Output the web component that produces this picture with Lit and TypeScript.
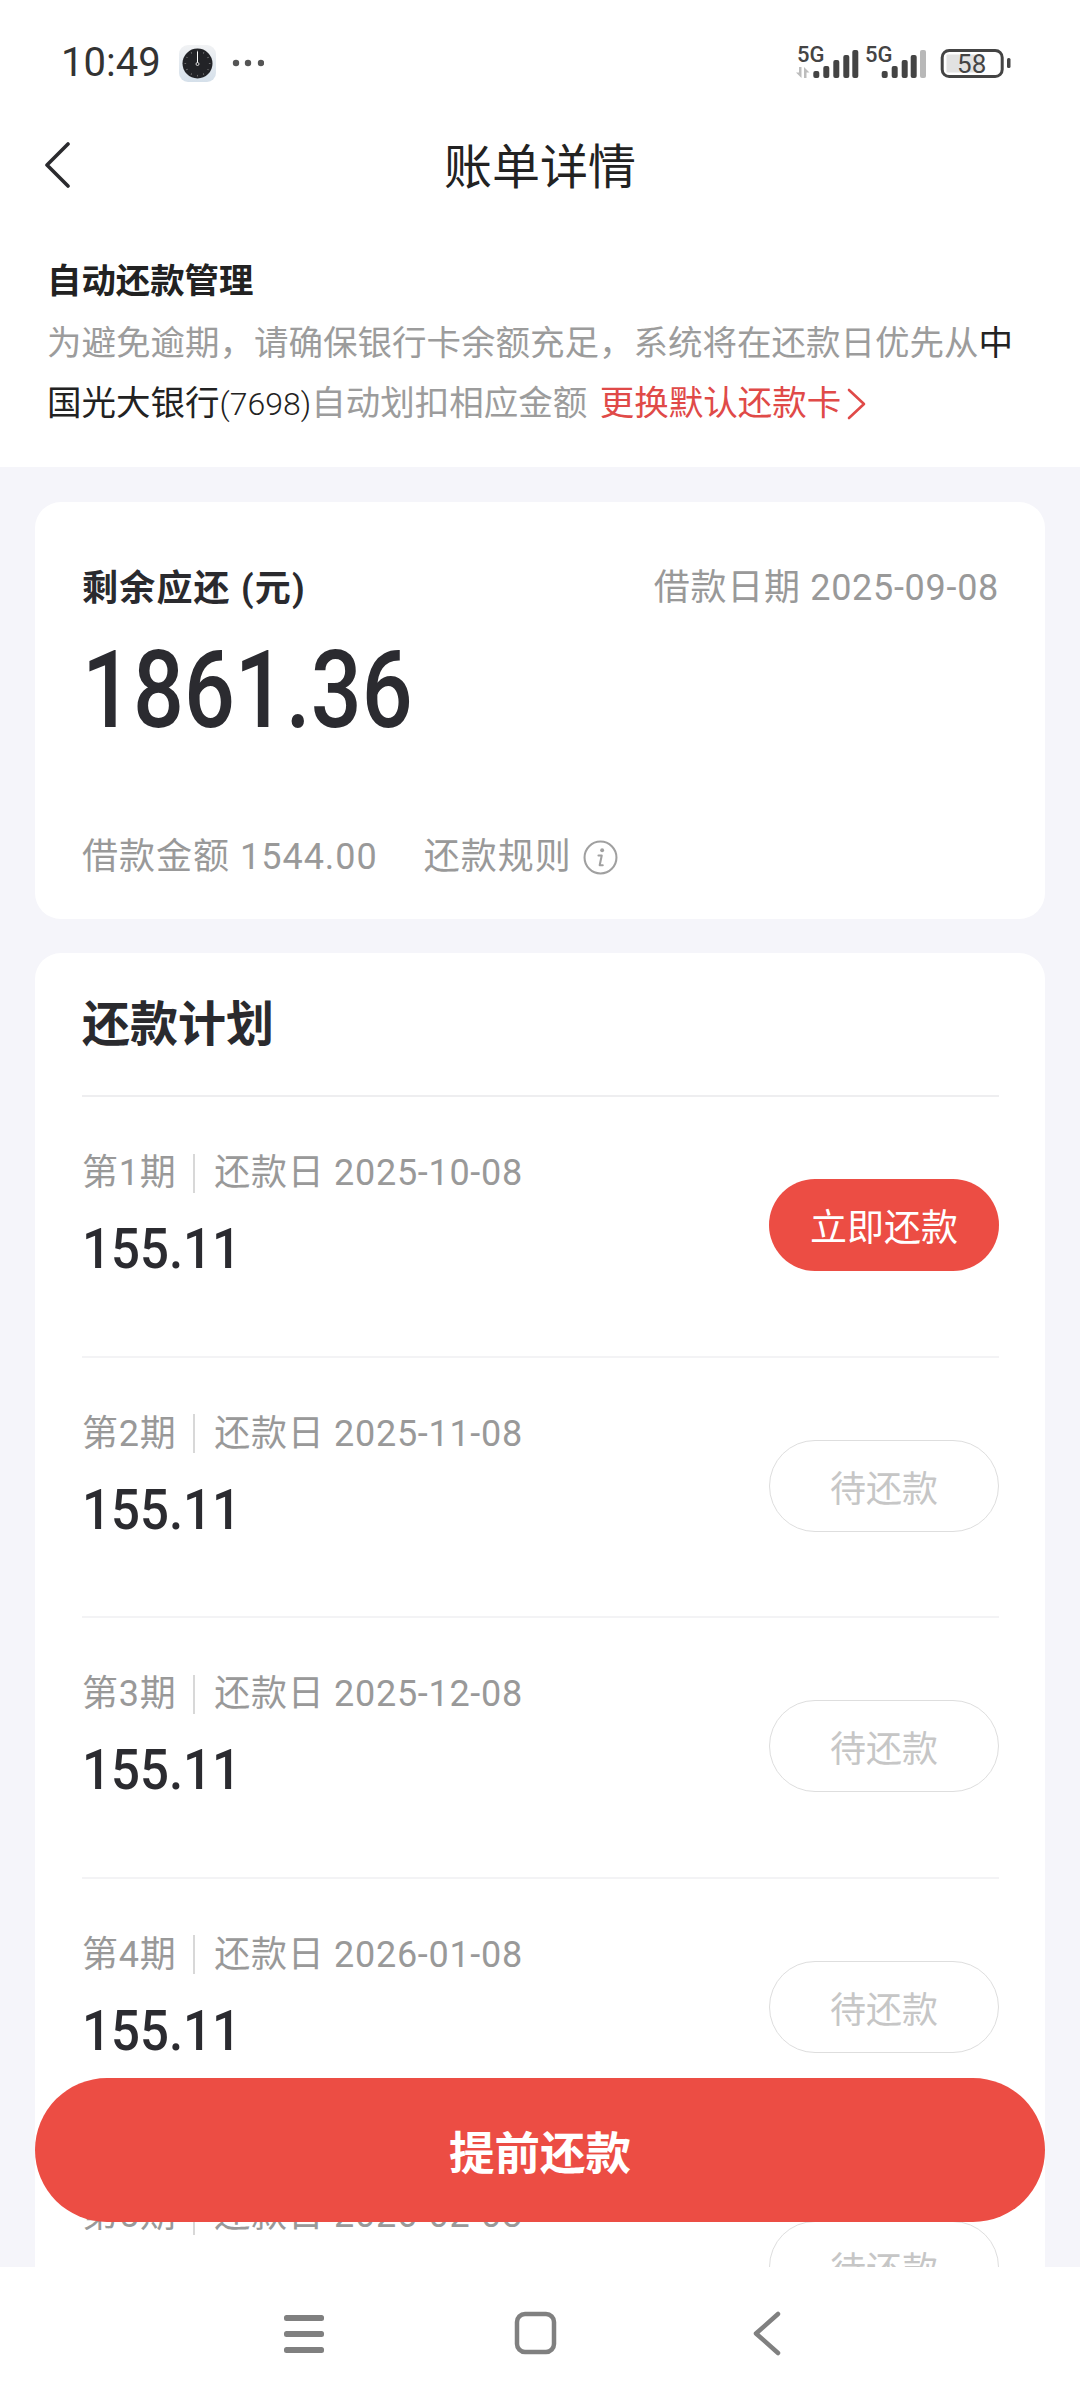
import { LitElement, html, css, svg } from "lit";
import { customElement } from "lit/decorators.js";

const COMMA = "\uFF0C";

const rows = [
  { n: 1, d: "2025-10-08", now: true },
  { n: 2, d: "2025-11-08", now: false },
  { n: 3, d: "2025-12-08", now: false },
  { n: 4, d: "2026-01-08", now: false },
  { n: 5, d: "2026-02-08", now: false },
];

const heights = [7, 12, 18, 23, 28];
const bars = (xs: number[], lastGray: boolean) =>
  xs.map(
    (x, i) =>
      svg`<rect x=${x} y=${33 - heights[i]} width="6" height=${heights[i]} rx="2" fill=${lastGray && i === 4 ? "#b8b8b8" : "#444"}></rect>`
  );

@customElement("app-root")
export class AppRoot extends LitElement {
  static styles = css`
    :host {
      display: flex;
      flex-direction: column;
      position: relative;
      width: 1080px;
      height: 2400px;
      overflow: hidden;
      background: #fff;
      font-family: Roboto, "Noto Sans CJK SC", sans-serif;
      color: #2a2a2e;
    }
    .status {
      height: 126px;
      flex: none;
      display: flex;
      align-items: center;
      padding: 0 68px 0 61px;
      box-sizing: border-box;
    }
    .time {
      font-size: 40px;
      font-weight: 400;
      color: #333;
      line-height: 1;
      width: 118px;
    }
    .dots {
      margin-left: 16px;
      flex: 1;
      display: flex;
    }
    .clock,
    .dots svg {
      display: block;
    }
    .sys {
      display: block;
      margin-top: 4px;
    }
    .head {
      height: 78px;
      flex: none;
      display: flex;
      align-items: center;
      justify-content: center;
      position: relative;
      font-size: 48px;
      color: #222;
      padding-bottom: 5px;
      box-sizing: border-box;
    }
    .back {
      position: absolute;
      left: 44px;
      top: 16px;
    }
    .notice {
      flex: none;
      padding: 52px 47px 34px;
    }
    .notice h2 {
      margin: 0 0 7px;
      font-size: 34.4px;
      line-height: 50px;
      font-weight: 700;
      color: #222;
    }
    .notice p {
      margin: 0;
      font-size: 34.5px;
      line-height: 60px;
      color: #9c9c9c;
      white-space: nowrap;
    }
    .dark {
      color: #222;
    }
    .num {
      font-weight: 300;
      font-size: 32px;
      line-height: 1;
    }
    .link {
      color: #e04a48;
      margin-left: 4px;
    }
    .link svg {
      vertical-align: -5px;
      margin-left: 6px;
    }
    .main {
      flex: 1;
      min-height: 0;
      overflow: hidden;
      background: #f5f5fa;
      padding: 35px 35px 0 35px;
      display: flex;
      flex-direction: column;
      gap: 34px;
    }
    .card {
      flex: none;
      background: #fff;
      border-radius: 26px;
      padding: 0 46px 0 47px;
    }
    .sum {
      height: 417px;
      box-sizing: border-box;
      padding-top: 61px;
    }
    .sum-top {
      display: flex;
      justify-content: space-between;
      align-items: center;
      height: 50px;
    }
    .sum-top b {
      font-size: 36px;
      font-weight: 700;
      color: #2a2a2e;
      letter-spacing: 1.2px;
      margin-bottom: 6px;
    }
    .muted {
      font-size: 36px;
      letter-spacing: 0.7px;
      color: #999;
      line-height: 50px;
      white-space: nowrap;
    }
    .big {
      font-size: 108px;
      font-weight: 500;
      line-height: 100px;
      height: 100px;
      margin-top: 27px;
      transform: scaleX(0.83);
      transform-origin: left center;
      color: #2b2b30;
    }
    .sum-bot {
      display: flex;
      align-items: center;
      margin-top: 92px;
      height: 50px;
    }
    .sum-bot .muted {
      letter-spacing: 1px;
    }
    .rule {
      margin-left: 46px;
    }
    .info {
      margin-left: 11px;
      display: block;
    }
    .plan {
      padding-bottom: 40px;
    }
    .plan h3 {
      margin: 0;
      height: 142px;
      line-height: 144px;
      font-size: 48px;
      font-weight: 700;
      color: #2a2a2e;
    }
    .row {
      border-top: 2px solid #f3f3f5;
      height: 260.5px;
      box-sizing: border-box;
      display: flex;
      align-items: center;
      justify-content: space-between;
    }
    .plan h3 + .row {
      border-top-color: #eeeef0;
    }
    .left {
      padding-bottom: 25px;
    }
    .label {
      display: flex;
      align-items: center;
    }
    .sep {
      width: 2px;
      height: 39px;
      background: #d8d8d8;
      margin: 0 19px 0 17px;
    }
    .amt {
      font-size: 56px;
      font-weight: 500;
      line-height: 60px;
      margin-top: 21px;
      transform: scaleX(0.91);
      transform-origin: left center;
      color: #2b2b30;
    }
    .btn {
      width: 230px;
      height: 92px;
      margin-bottom: 2px;
      box-sizing: border-box;
      border-radius: 46px;
      display: flex;
      align-items: center;
      justify-content: center;
      font-size: 36px;
    }
    .btn.on {
      background: #ec4d44;
      color: #fff;
      font-size: 37px;
    }
    .btn.off {
      border: 1px solid #dedede;
      color: #c6c6c6;
    }
    .cta {
      position: absolute;
      left: 35px;
      right: 35px;
      top: 2078px;
      height: 144px;
      border-radius: 72px;
      background: #ec4d44;
      color: #fff;
      font-size: 45.5px;
      font-weight: 700;
      display: flex;
      align-items: center;
      justify-content: center;
    }
    .nav {
      flex: none;
      position: relative;
      height: 133px;
      background: #fff;
      display: flex;
      justify-content: center;
      padding-top: 44px;
      box-sizing: border-box;
    }
    .nav svg {
      display: block;
    }
  `;

  private clock() {
    const ticks = [0, 30, 60, 90, 120, 150, 180, 210, 240, 270, 300, 330];
    return html`<svg class="clock" width="37" height="37" viewBox="0 0 37 37">
      <defs>
        <linearGradient id="cg" x1="0" y1="0" x2="0" y2="1">
          <stop offset="0" stop-color="#f1f2f4"></stop>
          <stop offset="1" stop-color="#d5e0ea"></stop>
        </linearGradient>
      </defs>
      <rect width="37" height="37" rx="9" fill="url(#cg)"></rect>
      <circle cx="18.5" cy="18.5" r="15" fill="#222327"></circle>
      ${ticks.map(
        (a) => svg`<rect x="18.2" y="5.5" width="0.7" height="1.6" fill="#8a8a8a" transform="rotate(${a} 18.5 18.5)"></rect>`
      )}
      <rect x="18" y="6.5" width="1" height="12" fill="#fff"></rect>
      <circle cx="18.5" cy="19" r="1.5" fill="#222327" stroke="#fff" stroke-width="0.8"></circle>
    </svg>`;
  }

  private sys() {
    return html`<svg class="sys" width="217" height="60" viewBox="0 -10 217 60">
      <text x="2" y="17" font-size="22" font-weight="500" fill="#444" font-family="Roboto">5G</text>
      <path d="M4 22h2.5v11L1 27.5h3zM9 33h2.5v-5.5h3L9 22z" fill="#bdbdbd"></path>
      ${bars([18.3, 28.3, 38.3, 48.3, 57.3], false)}
      <text x="70" y="17" font-size="22" font-weight="500" fill="#444" font-family="Roboto">5G</text>
      ${bars([86.7, 96.7, 106.7, 115.7, 125], true)}
      <rect x="151.5" y="9.5" width="36" height="18" fill="#e2e2e2"></rect>
      <rect x="147.2" y="5.5" width="60" height="26" rx="7" fill="none" stroke="#444" stroke-width="3"></rect>
      <text x="176.7" y="27.5" font-size="26" fill="#444" text-anchor="middle" font-family="Roboto">58</text>
      <rect x="212" y="13" width="3.5" height="10" rx="1.5" fill="#444"></rect>
    </svg>`;
  }

  render() {
    return html`
      <div class="status">
        <div class="time">10:49</div>
        ${this.clock()}
        <div class="dots">
          <svg width="32" height="8" viewBox="0 0 32 8">
            <circle cx="4" cy="4" r="3.2" fill="#555"></circle>
            <circle cx="16" cy="4" r="3.2" fill="#555"></circle>
            <circle cx="29" cy="4" r="3.2" fill="#555"></circle>
          </svg>
        </div>
        ${this.sys()}
      </div>
      <div class="head">
        <svg class="back" width="28" height="46" viewBox="0 0 28 46">
          <path d="M24 2 3 23l21 21" fill="none" stroke="#2a2a2e" stroke-width="3.6" stroke-linecap="round" stroke-linejoin="round"></path>
        </svg>
        账单详情
      </div>
      <div class="notice">
        <h2>自动还款管理</h2>
        <p>为避免逾期${COMMA}请确保银行卡余额充足${COMMA}系统将在还款日优先从<span class="dark">中</span></p>
        <p><span class="dark">国光大银行<span class="num">(7698)</span></span>自动划扣相应金额 <span class="link">更换默认还款卡<svg width="20" height="32" viewBox="0 0 20 32"><path d="M2 2l15 14L2 30" fill="none" stroke="#e04a48" stroke-width="2.6" stroke-linecap="round" stroke-linejoin="round"></path></svg></span></p>
      </div>
      <div class="main">
        <section class="card sum">
          <div class="sum-top">
            <b>剩余应还 (元)</b>
            <span class="muted">借款日期 2025-09-08</span>
          </div>
          <div class="big">1861.36</div>
          <div class="sum-bot">
            <span class="muted">借款金额 1544.00</span>
            <span class="muted rule">还款规则</span>
            <svg class="info" width="35" height="35" viewBox="0 0 34 34">
              <circle cx="17" cy="17" r="15.5" fill="none" stroke="#a0a0a0" stroke-width="2"></circle>
              <circle cx="18.6" cy="10" r="1.9" fill="#a0a0a0"></circle>
              <path d="M15 15h3.2l-2 9.5h3" fill="none" stroke="#a0a0a0" stroke-width="2" stroke-linecap="round" stroke-linejoin="round"></path>
            </svg>
          </div>
        </section>
        <section class="card plan">
          <h3>还款计划</h3>
          ${rows.map(
            (r) => html`<div class="row">
              <div class="left">
                <div class="label muted">
                  <span>第${r.n}期</span><i class="sep"></i><span>还款日 ${r.d}</span>
                </div>
                <div class="amt">155.11</div>
              </div>
              <div class="btn ${r.now ? "on" : "off"}">${r.now ? "立即还款" : "待还款"}</div>
            </div>`
          )}
        </section>
      </div>
      <div class="cta">提前还款</div>
      <div class="nav">
        <svg width="520" height="46" viewBox="0 0 520 46">
          <rect x="4" y="4" width="40" height="6" rx="2.5" fill="#808080"></rect>
          <rect x="4" y="20" width="40" height="6" rx="2.5" fill="#808080"></rect>
          <rect x="4" y="36" width="40" height="6" rx="2.5" fill="#808080"></rect>
          <rect x="237" y="3" width="37" height="38" rx="8" fill="none" stroke="#808080" stroke-width="4.5"></rect>
          <path d="M498 3 476 22.5 498 42" fill="none" stroke="#808080" stroke-width="4.5" stroke-linecap="round" stroke-linejoin="round"></path>
        </svg>
      </div>
    `;
  }
}
